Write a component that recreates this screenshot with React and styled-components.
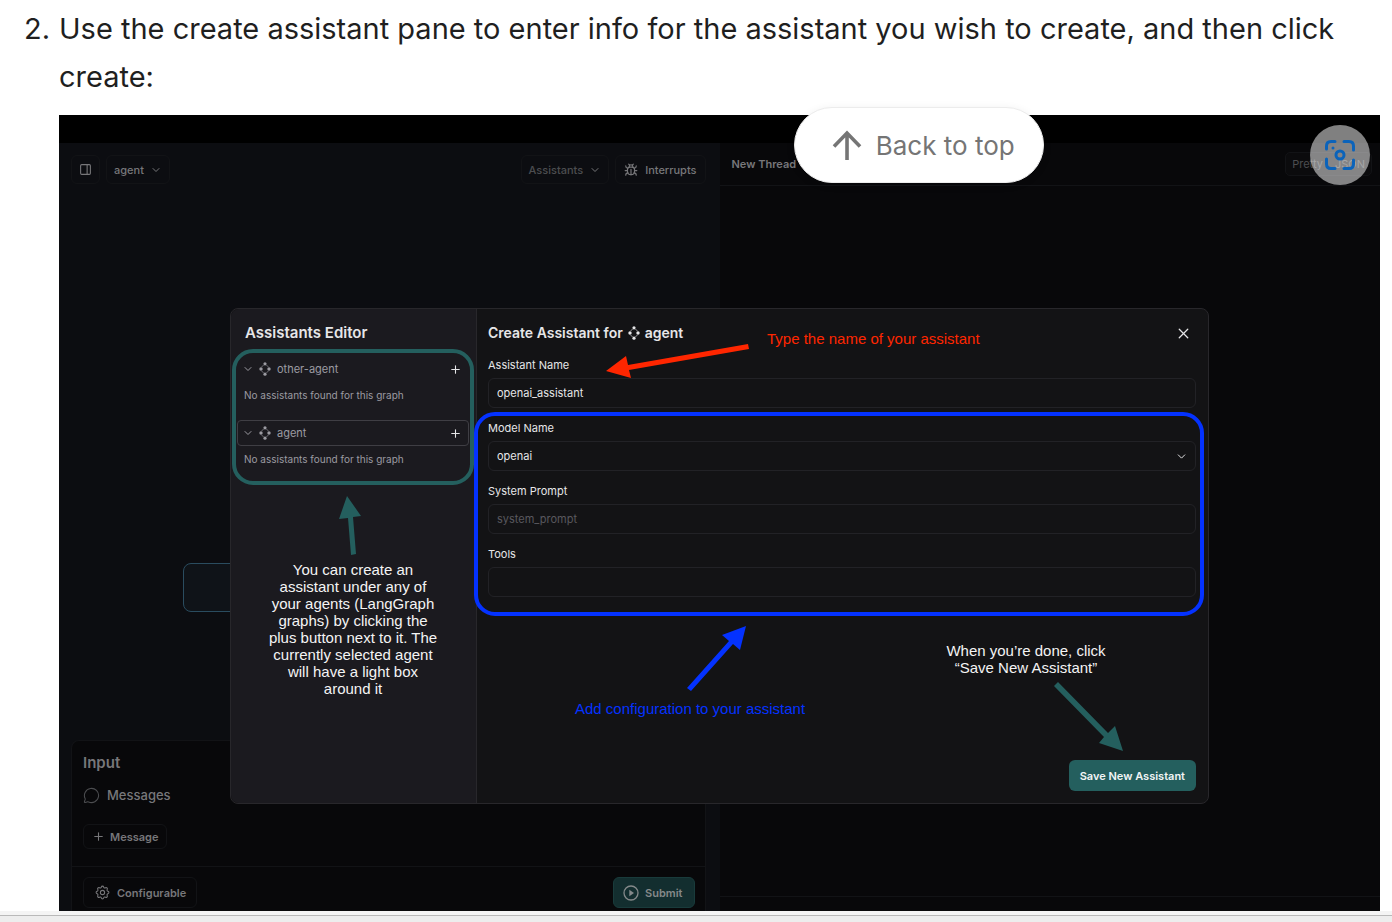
import React from "react";
import styled, { createGlobalStyle } from "styled-components";
import { Bug, ChevronDown, MessageCircle, PanelRight, Plus, X } from "lucide-react";
import { TbSettings } from "react-icons/tb";

const c = {
  canvas: "#0c0d11",
  card: "#08080a",
  line: "#121316",
  dim: "#77777a",
  dimmer: "#4c4d50",
  modal: "#131315",
  side: "#1b1a1f",
  border: "#28272b",
  text: "#e6e6e8",
  muted: "#9c9ba2",
  teal: "#245f5e",
  blue: "#0432ff",
  red: "#ff2600",
};

const Global = createGlobalStyle`
  *, *::before, *::after { box-sizing: border-box; }
  body { margin: 0; background: #fff; font-family: Inter, sans-serif; overflow-x: hidden; }
  button, input, select { font-family: inherit; margin: 0; }
  svg { display: block; flex: none; }
`;

const Page = styled.main`
  position: relative;
  min-height: 100vh;
  display: flex;
  flex-direction: column;
  overflow: hidden;
`;
const Steps = styled.ol`
  list-style: none;
  margin: 0;
  padding: 5px 12px 0 24px;
`;
const Step = styled.li`
  display: grid;
  grid-template-columns: 35px minmax(0, 1fr);
`;
const StepText = styled.p`
  margin: 0 0 14px;
  font-size: 29px;
  line-height: 48px;
  color: #1f1f1f;
`;
const Figure = styled.div`
  position: relative;
  background: ${c.canvas};
  font-size: 11px;
`;
const TitleBar = styled.div`
  height: 28px;
  background: #000;
`;
const Workspace = styled.div`
  display: grid;
  grid-template-columns: 1fr 1fr;
`;
const GraphPane = styled.section`
  display: flex;
  flex-direction: column;
  padding: 12px 14px 0 12px;
`;
const Toolbar = styled.div`
  display: flex;
  gap: 6px;
`;
const Spacer = styled.div`
  flex: 1;
`;
const ToolButton = styled.button`
  display: flex;
  align-items: center;
  gap: ${(p) => p.$gap || 6}px;
  height: ${(p) => p.$height || 29}px;
  padding: 0 ${(p) => p.$pad || 7}px;
  border: 1px solid ${c.line};
  border-radius: 6px;
  background: transparent;
  color: ${(p) => (p.$faint ? c.dimmer : c.dim)};
  font-size: 11px;
  font-weight: ${(p) => (p.$bold ? 600 : 500)};
`;
const Canvas = styled.div`
  position: relative;
  height: 556px;
`;
const Node = styled.div`
  position: absolute;
  left: 112px;
  top: 379px;
  width: 160px;
  height: 49px;
  border: 1px solid #2a4c5f;
  border-radius: 8px;
  background: #0f1318;
`;
const InputCard = styled.div`
  border: 1px solid ${c.line};
  border-bottom: 0;
  border-radius: 8px 8px 0 0;
  background: ${c.card};
`;
const CardBody = styled.div`
  display: flex;
  flex-direction: column;
  align-items: flex-start;
  padding: 12px 11px 17px;
`;
const CardTitle = styled.h2`
  margin: 0 0 11px;
  font-size: 15px;
  line-height: 20px;
  font-weight: 600;
  color: ${c.dim};
`;
const MessagesRow = styled.div`
  display: flex;
  align-items: center;
  gap: 7px;
  margin-bottom: 18px;
  font-size: 13px;
  line-height: 22px;
  font-weight: 500;
  color: ${c.dim};
  svg { color: ${c.dimmer}; }
`;
const CardFooter = styled.div`
  display: flex;
  justify-content: space-between;
  padding: 10px 10px 3px 11px;
  border-top: 1px solid ${c.line};
`;
const SubmitButton = styled.button`
  display: flex;
  align-items: center;
  gap: 6px;
  height: 31px;
  padding: 0 11px 0 9px;
  border: 1px solid #193b3b;
  border-radius: 6px;
  background: #132e2f;
  color: #85898a;
  font-size: 11px;
  font-weight: 600;
`;
const ThreadPane = styled.section`
  display: flex;
  flex-direction: column;
  background: ${c.card};
`;
const ThreadHeader = styled.header`
  display: flex;
  align-items: center;
  justify-content: space-between;
  height: 43px;
  padding: 0 8px 0 12px;
  border-bottom: 1px solid ${c.line};
  font-weight: 600;
  color: ${c.dim};
`;
const Segments = styled.div`
  display: flex;
  border: 1px solid ${c.line};
  border-radius: 5px;
  background: #0b0b0d;
`;
const Segment = styled.button`
  height: 22px;
  padding: 0 6px;
  border: 0;
  border-radius: 4px;
  background: transparent;
  color: ${c.dimmer};
  font-size: 11px;
`;
const ThreadFooter = styled.div`
  height: 15px;
  margin-top: auto;
  border-top: 1px solid ${c.line};
`;

const Overlay = styled.div`
  position: absolute;
  inset: 193px 0 0;
  display: flex;
  align-items: flex-start;
  padding: 0 171px;
`;
const Modal = styled.div`
  position: relative;
  flex: 1;
  display: grid;
  grid-template-columns: 246px minmax(0, 1fr);
  min-height: 496px;
  border: 1px solid ${c.border};
  border-radius: 8px;
  background: ${c.modal};
`;
const Sidebar = styled.aside`
  padding: 14px 2px 0 1px;
  border-right: 1px solid ${c.border};
  border-radius: 8px 0 0 8px;
  background: ${c.side};
`;
const SideTitle = styled.h2`
  margin: 0 0 6px;
  padding-left: 13px;
  font-size: 15px;
  line-height: 20px;
  font-weight: 600;
  color: ${c.text};
`;
const Groups = styled.div`
  border: 4px solid ${c.teal};
  border-radius: 21px;
  padding: 3px 1px 9px;
`;
const Group = styled.div`
  & + & { margin-top: 12px; }
`;
const GroupRow = styled.div`
  display: flex;
  align-items: center;
  gap: 4px;
  height: 26px;
  padding: 0 6px 0 4px;
  border: 1px solid ${(p) => (p.$selected ? "#3f3e44" : "transparent")};
  border-radius: 4px;
  color: ${c.muted};
  font-size: 11px;
`;
const IconButton = styled.button`
  display: flex;
  padding: 0;
  border: 0;
  background: transparent;
  color: ${c.text};
`;
const GroupName = styled.span`
  flex: 1;
  padding-left: 1px;
`;
const Empty = styled.p`
  margin: 0;
  padding: 5px 0 5px 7px;
  font-size: 10px;
  line-height: 16px;
  color: ${c.muted};
`;
const SideNote = styled.div`
  display: flex;
  flex-direction: column;
  align-items: center;
  gap: 6px;
  margin-top: 11px;
`;
const NoteText = styled.p`
  margin: 0;
  width: ${(p) => p.$width || "auto"};
  text-align: center;
  white-space: ${(p) => (p.$nowrap ? "nowrap" : "normal")};
  font-family: "Liberation Sans", Arial, sans-serif;
  font-size: 15px;
  line-height: 17px;
  color: ${(p) => p.$color || "#f4f4f4"};
`;
const Editor = styled.form`
  display: flex;
  flex-direction: column;
  padding: 14px 12px 12px 11px;
`;
const EditorHeader = styled.header`
  display: flex;
  align-items: center;
  justify-content: space-between;
  padding-right: 4px;
  margin-bottom: 14px;
`;
const EditorTitle = styled.h1`
  display: flex;
  align-items: center;
  gap: 4px;
  margin: 0;
  font-size: 14px;
  line-height: 20px;
  font-weight: 600;
  color: ${c.text};
`;
const ConfigFields = styled.div`
  position: relative;
  &::after {
    content: "";
    position: absolute;
    inset: -8px -8px -7px -14px;
    border: 4px solid ${c.blue};
    border-radius: 21px;
    pointer-events: none;
  }
`;
const Field = styled.div`
  display: flex;
  flex-direction: column;
  gap: 5px;
  margin-bottom: 12px;
`;
const Label = styled.label`
  font-size: 11px;
  line-height: 16px;
  color: ${c.text};
`;
const Control = styled.input`
  width: 100%;
  height: 30px;
  padding: 0 8px;
  border: 1px solid #222226;
  border-radius: 6px;
  background: transparent;
  color: ${c.text};
  font-size: 11px;
  appearance: none;
  &::placeholder { color: #59585e; opacity: 1; }
`;
const SelectWrap = styled.div`
  display: grid;
  align-items: center;
  & > * { grid-area: 1 / 1; }
  svg { justify-self: end; margin-right: 8px; color: ${c.text}; pointer-events: none; }
`;
const SaveButton = styled.button`
  align-self: flex-end;
  height: 31px;
  margin-top: auto;
  padding: 0 11px;
  border: 0;
  border-radius: 6px;
  background: ${c.teal};
  color: #f2f5f5;
  font-size: 11px;
  font-weight: 600;
`;
const NameNote = styled.div`
  position: absolute;
  left: 375px;
  top: 21px;
  display: flex;
  gap: 18px;
`;
const ConfigNote = styled.div`
  position: absolute;
  left: 344px;
  top: 317px;
  display: flex;
  flex-direction: column;
  align-items: flex-end;
  gap: 8px;
  svg { margin-right: 58px; }
`;
const SaveNote = styled.div`
  position: absolute;
  right: 84px;
  top: 333px;
  display: flex;
  flex-direction: column;
  align-items: flex-end;
  gap: 6px;
`;
const BackToTop = styled.button`
  position: absolute;
  left: 66%;
  top: 107px;
  display: flex;
  align-items: center;
  gap: 14px;
  height: 76px;
  padding: 0 28px 0 37px;
  transform: translateX(-50%);
  border: 1px solid #ececec;
  border-radius: 38px;
  background: #fff;
  box-shadow: 0 2px 10px rgba(0, 0, 0, 0.08);
  color: #757575;
  font-size: 26px;
  white-space: nowrap;
`;
const LensButton = styled.button`
  position: absolute;
  right: 22px;
  top: 125px;
  display: grid;
  place-items: center;
  width: 60px;
  height: 60px;
  padding: 0;
  border: 0;
  border-radius: 50%;
  background: rgba(255, 255, 255, 0.5);
`;
const StatusBar = styled.footer`
  flex: 1;
  min-height: 11px;
  border-top: 4px solid #f4f4f4;
  background: #ededed;
  &::before {
    content: "";
    display: block;
    height: 1px;
    background: #b9b9b9;
  }
`;

function GraphIcon() {
  return (
    <svg width="14" height="14" viewBox="0 0 14 14" fill="currentColor" aria-hidden="true">
      <circle cx="7" cy="1.8" r="1.6" />
      <circle cx="3" cy="7" r="1.7" />
      <circle cx="11" cy="7" r="1.7" />
      <circle cx="7" cy="12.2" r="1.6" />
      <path
        d="M5.4 3.2 L3.8 4.8 M8.6 3.2 L10.2 4.8 M5.4 10.8 L3.8 9.2 M8.6 10.8 L10.2 9.2"
        fill="none" stroke="currentColor" strokeWidth="0.8"
      />
    </svg>
  );
}

function PlayIcon() {
  return (
    <svg width="16" height="16" viewBox="0 0 16 16" aria-hidden="true">
      <circle cx="8" cy="8" r="7" fill="none" stroke="currentColor" strokeWidth="1.3" />
      <path d="M6.3 4.8 L11 8 L6.3 11.2 Z" fill="currentColor" />
    </svg>
  );
}

function AgentGroup({ name, selected }) {
  return (
    <Group>
      <GroupRow $selected={selected}>
        <ChevronDown size={12} />
        <GraphIcon />
        <GroupName>{name}</GroupName>
        <IconButton type="button" aria-label={"Add assistant to " + name}><Plus size={13} /></IconButton>
      </GroupRow>
      <Empty>No assistants found for this graph</Empty>
    </Group>
  );
}

export default function App() {
  return (
    <Page>
      <Global />
      <Steps start={2}>
        <Step>
          <StepText>2.</StepText>
          <div>
            <StepText>
              Use the create assistant pane to enter info for the assistant you wish to create, and then click create:
            </StepText>
            <Figure>
              <TitleBar />
              <Workspace>
                <GraphPane>
                  <Toolbar>
                    <ToolButton aria-label="Toggle panel"><PanelRight size={13} /></ToolButton>
                    <ToolButton>agent <ChevronDown size={12} /></ToolButton>
                    <Spacer />
                    <ToolButton $faint>Assistants <ChevronDown size={12} color={c.dim} /></ToolButton>
                    <ToolButton $pad={8} $gap={7}><Bug size={14} /> Interrupts</ToolButton>
                  </Toolbar>
                  <Canvas><Node /></Canvas>
                  <InputCard>
                    <CardBody>
                      <CardTitle>Input</CardTitle>
                      <MessagesRow><MessageCircle size={17} strokeWidth={1.5} /> Messages</MessagesRow>
                      <ToolButton $height={25} $pad={8} $gap={5} $bold><Plus size={13} /> Message</ToolButton>
                    </CardBody>
                    <CardFooter>
                      <ToolButton $height={31} $pad={10} $bold><TbSettings size={17} strokeWidth={1.5} /> Configurable</ToolButton>
                      <SubmitButton><PlayIcon /> Submit</SubmitButton>
                    </CardFooter>
                  </InputCard>
                </GraphPane>
                <ThreadPane>
                  <ThreadHeader>
                    New Thread
                    <Segments>
                      <Segment>Pretty</Segment>
                      <Segment>JSON</Segment>
                    </Segments>
                  </ThreadHeader>
                  <ThreadFooter />
                </ThreadPane>
              </Workspace>
              <Overlay>
                <Modal role="dialog" aria-label="Create assistant">
                  <Sidebar>
                    <SideTitle>Assistants Editor</SideTitle>
                    <Groups>
                      <AgentGroup name="other-agent" />
                      <AgentGroup name="agent" selected />
                    </Groups>
                    <SideNote>
                      <svg width="30" height="59" viewBox="0 0 30 59" fill={c.teal}>
                        <path d="M9 0 L23 20 L15 21 L18 58 L13 59 L10 22 L1 23 Z" />
                      </svg>
                      <NoteText $width="172px">
                        You can create an assistant under any of your agents (LangGraph graphs) by clicking the plus
                        button next to it. The currently selected agent will have a light box around it
                      </NoteText>
                    </SideNote>
                  </Sidebar>
                  <Editor onSubmit={(e) => e.preventDefault()}>
                    <EditorHeader>
                      <EditorTitle>Create Assistant for <GraphIcon /> agent</EditorTitle>
                      <IconButton type="button" aria-label="Close"><X size={17} strokeWidth={1.8} /></IconButton>
                    </EditorHeader>
                    <Field>
                      <Label htmlFor="name">Assistant Name</Label>
                      <Control id="name" defaultValue="openai_assistant" />
                    </Field>
                    <ConfigFields>
                      <Field>
                        <Label htmlFor="model">Model Name</Label>
                        <SelectWrap>
                          <Control as="select" id="model"><option>openai</option></Control>
                          <ChevronDown size={13} strokeWidth={1.8} />
                        </SelectWrap>
                      </Field>
                      <Field>
                        <Label htmlFor="prompt">System Prompt</Label>
                        <Control id="prompt" placeholder="system_prompt" />
                      </Field>
                      <Field>
                        <Label htmlFor="tools">Tools</Label>
                        <Control id="tools" />
                      </Field>
                    </ConfigFields>
                    <SaveButton type="submit">Save New Assistant</SaveButton>
                  </Editor>
                  <NameNote>
                    <svg width="143" height="48" viewBox="0 0 143 48" fill={c.red}>
                      <path d="M0 41 L20 26 L22 35 L142 14 L143 19 L23 40 L25 48 Z" />
                    </svg>
                    <NoteText $nowrap $color={c.red}>Type the name of your assistant</NoteText>
                  </NameNote>
                  <ConfigNote>
                    <svg width="60" height="66" viewBox="0 0 60 66" fill={c.blue}>
                      <path d="M59 0 L53 24 L46 18 L4 65 L0 62 L42 15 L35 9 Z" />
                    </svg>
                    <NoteText $nowrap $color={c.blue}>Add configuration to your assistant</NoteText>
                  </ConfigNote>
                  <SaveNote>
                    <NoteText $width="196px">When you’re done, click “Save New Assistant”</NoteText>
                    <svg width="70" height="69" viewBox="0 0 70 69" fill={c.teal}>
                      <path d="M4 0 L54 51 L61 44 L69 69 L45 61 L50 55 L0 4 Z" />
                    </svg>
                  </SaveNote>
                </Modal>
              </Overlay>
            </Figure>
          </div>
        </Step>
      </Steps>
      <StatusBar />
      <BackToTop>
        <svg width="30" height="30" viewBox="0 0 30 30" fill="none" stroke="currentColor" strokeWidth="3.6" aria-hidden="true">
          <path d="M15 30 V3 M2 16.5 L15 3 L28 16.5" />
        </svg>
        Back to top
      </BackToTop>
      <LensButton aria-label="Search image">
        <svg width="32" height="32" viewBox="0 0 32 32" fill="none" stroke="#0b63ba" strokeWidth="3" strokeLinecap="round">
          <path d="M2.5 10V7Q2.5 2.5 7 2.5H11 M20 2.5H25Q29.5 2.5 29.5 7V11 M29.5 21V25Q29.5 29.5 25 29.5H20 M11 29.5H7Q2.5 29.5 2.5 25V20" />
          <circle cx="16" cy="16" r="4" />
          <circle cx="9" cy="9" r="1.5" fill="#0b63ba" stroke="none" />
        </svg>
      </LensButton>
    </Page>
  );
}
